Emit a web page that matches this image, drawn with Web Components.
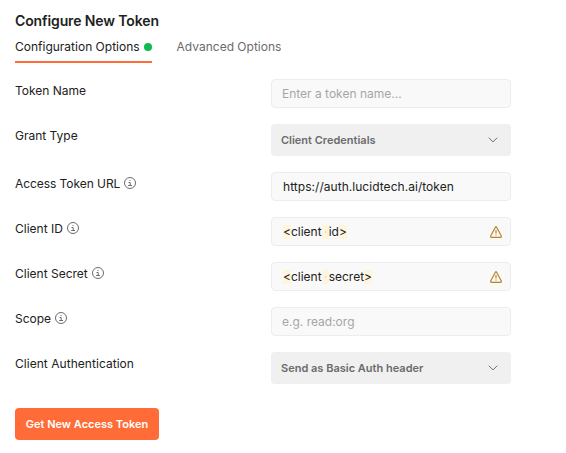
<!DOCTYPE html>
<html lang="en">
<head>
<meta charset="utf-8">
<title>Configure New Token</title>
<style>
body { margin: 0; background: #fff; font-family: Inter, sans-serif; font-size: 12px; line-height: 16px; color: #212121; }
</style>
</head>
<body>
<token-form></token-form>
<script>
const define = (name, html) => customElements.define(name, class extends HTMLElement {
  constructor() {
    super();
    const t = document.createElement('template');
    t.innerHTML = html;
    this.attachShadow({ mode: 'open' }).append(t.content.cloneNode(true));
  }
});

define('info-icon', `<style>:host{display:block;width:12px;height:12px}svg{display:block}</style>
<svg width="12" height="12" viewBox="0 0 12 12" fill="none" stroke="#6b6b6b"><circle cx="6" cy="6" r="5.5"/><path d="M4.5 5.5H6.2V8.5M4.2 8.5H8"/><path d="M5.5 3.5H6.5"/></svg>`);

define('warning-icon', `<style>:host{display:block;width:12px;height:12px}svg{display:block}</style>
<svg width="12" height="12" viewBox="0 0 12 12" fill="none" stroke="#b9852a" stroke-width="1.2" stroke-linejoin="round"><path d="M5.4 1.2Q6 .2 6.6 1.2L11.3 10Q11.6 11.3 10.6 11.3H1.4Q.4 11.3 .7 10Z"/><path d="M6 4V7.6M6 8.4V9.6"/></svg>`);

define('chevron-icon', `<style>:host{display:block;width:10px;height:6px}svg{display:block}</style>
<svg width="10" height="6" viewBox="0 0 10 6" fill="none" stroke="#6b6b6b"><path d="M.8 .7L5 4.9L9.2 .7"/></svg>`);

define('tab-item', `<style>
:host{display:flex;align-items:center;gap:4px;height:24px;padding-bottom:6px;border-bottom:2px solid transparent;color:#6b6b6b;box-sizing:border-box}
:host([active]){color:#212121;border-color:#ff6c37}
i{display:none;width:8px;height:8px;border-radius:50%;background:#0cbb52}
:host([active]) i{display:block}
</style><span><slot></slot></span><i></i>`);

define('form-row', `<style>
:host{display:grid;grid-template-columns:256px 240px}
.label{display:flex;gap:4px;padding-top:4px;height:16px}
::slotted(info-icon){margin-top:1px}
</style><div class="label"><slot name="label"></slot><slot name="info"></slot></div><slot></slot>`);

define('text-field', `<style>
:host{display:flex;align-items:center;justify-content:space-between;box-sizing:border-box;height:29px;padding:0 8px 0 11px;border:1px solid #ededed;border-radius:4px;background:#f9f9f9}
:host([placeholder]){color:#a6a6a6;padding-left:10px}
</style><span><slot></slot></span><slot name="icon"></slot>`);

define('mark-char', `<style>
:host{display:inline-block;height:14px;line-height:14px;background:#fff5dc;text-align:center}
:host([space]){width:7px;height:14px;vertical-align:top;margin-top:1px;background:radial-gradient(circle .8px at 3.5px 7px,#d9d5cb 99%,transparent) #fff5dc}
</style><slot></slot>`);

define('select-field', `<style>
:host{display:flex;align-items:center;justify-content:space-between;box-sizing:border-box;height:32px;padding:0 13px 0 10px;border-radius:4px;background:#f0f0f0;color:#6b6b6b;font-size:11px;font-weight:600}
</style><span><slot></slot></span><chevron-icon></chevron-icon>`);

define('primary-button', `<style>
:host{display:flex;align-items:center;justify-content:center;width:144px;height:32px;border-radius:4px;background:#ff6c37;color:#fff;font-size:11px;font-weight:600}
</style><slot></slot>`);

define('token-form', `<style>
:host{display:block;padding:11px 0 0 15px}
h1{margin:0;font-size:14px;line-height:20px;font-weight:600;letter-spacing:-.12px}
.tight{letter-spacing:-.06px}
.wide{letter-spacing:.04px}
nav{display:flex;gap:25px;margin-top:8px}
main{display:flex;flex-direction:column;gap:16px;margin:16px 0 24px}
</style>
<h1>Configure New Token</h1>
<nav><tab-item active>Configuration Options</tab-item><tab-item>Advanced Options</tab-item></nav>
<main>
<form-row><span slot="label">Token Name</span><text-field placeholder>Enter a token name...</text-field></form-row>
<form-row><span slot="label">Grant Type</span><select-field>Client Credentials</select-field></form-row>
<form-row><span slot="label" class="tight">Access Token URL</span><info-icon slot="info"></info-icon><text-field class="wide">https://auth.lucidtech.ai/token</text-field></form-row>
<form-row><span slot="label">Client ID</span><info-icon slot="info"></info-icon><text-field><mark-char>&lt;</mark-char>client<mark-char space></mark-char>id<mark-char>&gt;</mark-char><warning-icon slot="icon"></warning-icon></text-field></form-row>
<form-row><span slot="label">Client Secret</span><info-icon slot="info"></info-icon><text-field><mark-char>&lt;</mark-char>client<mark-char space></mark-char>secret<mark-char>&gt;</mark-char><warning-icon slot="icon"></warning-icon></text-field></form-row>
<form-row><span slot="label">Scope</span><info-icon slot="info"></info-icon><text-field placeholder>e.g. read:org</text-field></form-row>
<form-row><span slot="label" class="wide">Client Authentication</span><select-field>Send as Basic Auth header</select-field></form-row>
</main>
<primary-button>Get New Access Token</primary-button>`);
</script>
</body>
</html>
